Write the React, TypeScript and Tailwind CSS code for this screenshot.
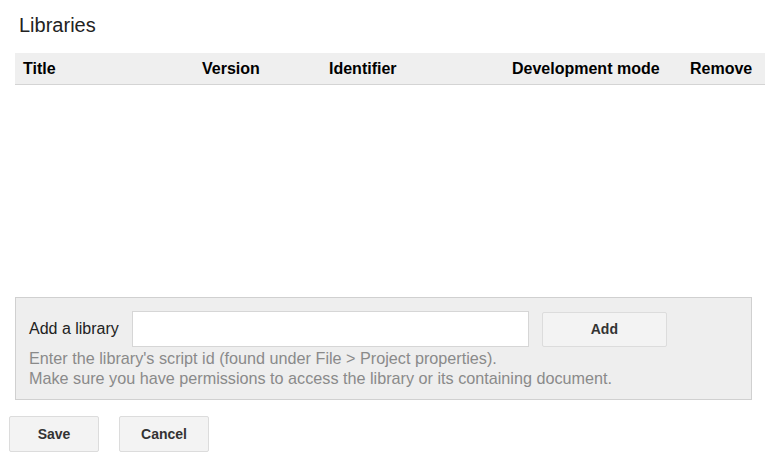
import React from "react";

const font = { fontFamily: '"Liberation Sans", Arial, sans-serif' };

export default function App() {
  return (
    <div className="h-[460px] w-[780px] bg-white text-[#222]" style={font}>
      <div className="px-[19px] pt-[13px] text-[20px] leading-[24px]">Libraries</div>

      <div className="mx-[15px] mt-[16px] grid h-[32px] grid-cols-[179px_127px_183px_178px_1fr] items-center border-b border-[#d4d4d4] bg-[#efefef] pl-2 text-[16px] font-bold text-black">
        <div>Title</div>
        <div>Version</div>
        <div>Identifier</div>
        <div>Development mode</div>
        <div>Remove</div>
      </div>

      <div className="h-[212px]" />

      <div className="mx-[15px] w-[737px] border border-[#d0d0d0] bg-[#eeeeee] px-[13px] pt-[13px] pb-[11px]">
        <div className="flex items-center">
          <span className="text-[16px]">Add a library</span>
          <input
            className="ml-[13px] h-[36px] w-[397px] border border-[#d6d6d6] bg-white px-2 text-[16px] outline-none"
            type="text"
          />
          <button className="ml-[13px] h-[35px] w-[125px] rounded-[2px] border border-[#dcdcdc] bg-[#f3f3f3] text-[14px] font-bold text-[#333]">
            Add
          </button>
        </div>
        <div className="mt-[1px] text-[16.2px] leading-[20px] text-[#8a8a8a]">
          <div>Enter the library's script id (found under File &gt; Project properties).</div>
          <div>Make sure you have permissions to access the library or its containing document.</div>
        </div>
      </div>

      <div className="mt-[16px] flex gap-[20px] pl-[9px]">
        <button className="h-[36px] w-[90px] rounded-[2px] border border-[#dcdcdc] bg-[#f3f3f3] text-[14px] font-bold text-[#333]">
          Save
        </button>
        <button className="h-[36px] w-[90px] rounded-[2px] border border-[#dcdcdc] bg-[#f3f3f3] text-[14px] font-bold text-[#333]">
          Cancel
        </button>
      </div>
    </div>
  );
}
